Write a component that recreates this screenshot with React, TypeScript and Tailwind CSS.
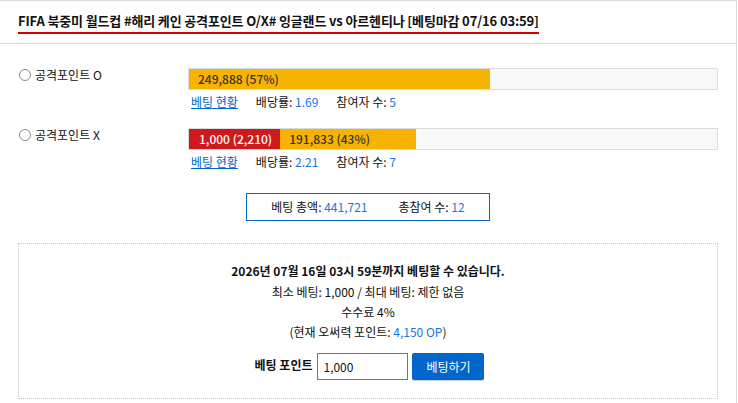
import React from 'react';

const options = [
  { label: '공격포인트 O', percent: 57, amount: '249,888', odds: '1.69', users: 5, mine: null },
  { label: '공격포인트 X', percent: 43, amount: '191,833', odds: '2.21', users: 7, mine: '1,000 (2,210)' },
];

const Radio = () => (
  <span className="inline-block w-[12px] h-[12px] rounded-full border border-[#8a8a8a] bg-white shrink-0" />
);

const OptionRow = ({ option }) => (
  <div className="flex">
    <div className="w-[170px] flex items-center gap-[4px] pl-[1px] h-[16px] mt-[-1px]">
      <Radio />
      <span className="leading-[16px] text-[#111]">{option.label}</span>
    </div>
    <div className="flex-1">
      <div className="h-[22px] border border-[#dcdcdc] bg-[#f8f8f8]">
        <div className="h-full bg-[#f8b200] flex" style={{ width: `${option.percent}%` }}>
          {option.mine && (
            <span className="h-full bg-[#d0191c] text-white font-medium pl-[10px] pr-[8px] leading-[20px] whitespace-nowrap">
              {option.mine}
            </span>
          )}
          <span className="pl-[9px] leading-[20px] text-[#333] font-medium whitespace-nowrap">
            {option.amount} ({option.percent}%)
          </span>
        </div>
      </div>
      <div className="flex leading-[20px] mt-[2px] pl-[3px] text-[#111]">
        <a href="#" className="text-[#0066cc] underline mr-[18px]">베팅 현황</a>
        <span className="mr-[18px]">
          배당률: <span className="text-[#1a73e8]">{option.odds}</span>
        </span>
        <span>
          참여자 수: <span className="text-[#1a73e8]">{option.users}</span>
        </span>
      </div>
    </div>
  </div>
);

export default function App() {
  return (
    <div className="w-[737px] h-[403px] bg-white border-r border-t border-[#dcdcdc] font-['Noto_Sans_CJK_KR',sans-serif] text-[12px] overflow-hidden">
      <div className="h-[43px] border-b border-[#dcdcdc] px-[18px] pt-[10px]">
        <span className="inline-block text-[13px] font-semibold tracking-[-0.15px] leading-[19px] pb-[2px] border-b-2 border-[#d40000] text-[#111]">
          FIFA 북중미 월드컵 #해리 케인 공격포인트 O/X# 잉글랜드 vs 아르헨티나 [베팅마감 07/16 03:59]
        </span>
      </div>

      <div className="px-[18px] pt-[24px]">
        <div className="flex flex-col gap-[16px]">
          {options.map((o) => (
            <OptionRow key={o.label} option={o} />
          ))}
        </div>

        <div className="flex justify-center mt-[21px]">
          <div className="h-[28px] border border-[#0a66c2] flex items-center gap-[31px] px-[24px] text-[#111]">
            <span>
              베팅 총액: <span className="text-[#1a73e8]">441,721</span>
            </span>
            <span>
              총참여 수: <span className="text-[#1a73e8]">12</span>
            </span>
          </div>
        </div>

        <div className="mt-[22px] h-[156px] border border-dotted border-[#c8c8c8] flex flex-col items-center pt-[17px] text-[#111]">
          <p className="font-bold leading-[20px]">2026년 07월 16일 03시 59분까지 베팅할 수 있습니다.</p>
          <p className="leading-[20px] mt-[1px]">최소 베팅: 1,000 / 최대 베팅: 제한 없음</p>
          <p className="leading-[20px]">수수료 4%</p>
          <p className="leading-[20px]">
            (현재 오써력 포인트: <span className="text-[#1a73e8]">4,150 OP</span>)
          </p>
          <div className="flex items-center mt-[11px] pl-[3px]">
            <span className="font-bold mr-[5px] mt-[-4px]">베팅 포인트</span>
            <input
              defaultValue="1,000"
              className="w-[91px] h-[27px] border border-[#767676] px-[5px] text-[12px] text-[#111] outline-none"
            />
            <button className="ml-[4px] w-[72px] h-[27px] bg-[#0066cc] text-white rounded-[2px] shadow-[0_1px_1px_rgba(0,0,0,0.2)]">
              베팅하기
            </button>
          </div>
        </div>
      </div>
    </div>
  );
}
